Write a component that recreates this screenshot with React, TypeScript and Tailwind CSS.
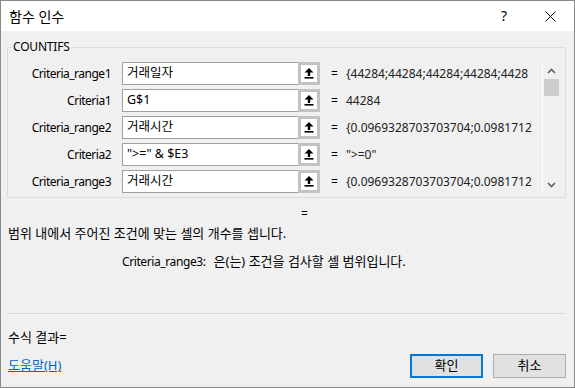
import { ReactNode } from 'react';

const font = { fontFamily: '"Noto Sans", "Noto Sans CJK KR", sans-serif' };

const rows = [
  { label: 'Criteria_range1', input: '거래일자', value: '{44284;44284;44284;44284;4428' },
  { label: 'Criteria1', input: 'G$1', value: '44284' },
  { label: 'Criteria_range2', input: '거래시간', value: '{0.0969328703703704;0.0981712' },
  { label: 'Criteria2', input: '">=" & $E3', value: '">=0"' },
  { label: 'Criteria_range3', input: '거래시간', value: '{0.0969328703703704;0.0981712' },
];

// collapse-dialog icon: arrow up over a bar
const RefIcon = () => (
  <svg width="10" height="11" viewBox="0 0 10 11">
    <path d="M5 0 L9.5 4.5 L6.2 4.5 L6.2 8 L3.8 8 L3.8 4.5 L0.5 4.5 Z" fill="#000" />
    <rect x="0.5" y="9" width="9" height="1.6" fill="#000" />
  </svg>
);

const Chevron = ({ up }: { up?: boolean }) => (
  <svg width="9" height="6" viewBox="0 0 9 6" className={up ? '' : 'rotate-180'}>
    <path d="M1 5 L4.5 1.5 L8 5" fill="none" stroke="#606060" strokeWidth="1.6" />
  </svg>
);

const Field = ({ children }: { children: ReactNode }) => (
  <div className="flex h-[23px] w-[198px]">
    <div className="flex flex-1 items-center overflow-hidden whitespace-nowrap border border-r-0 border-[#a0a0a0] bg-white pl-[4px] text-[12.5px] text-black">
      {children}
    </div>
    <div className="flex w-[22px] items-center justify-center border-[3px] border-[#c2c2c2] bg-white">
      <RefIcon />
    </div>
  </div>
);

const Button = ({ label, primary }: { label: string; primary?: boolean }) => (
  <div
    className={
      primary
        ? 'flex h-[24px] w-[73px] items-center justify-center border-2 border-[#0078d7] bg-[#e1e1e1] text-[13px] text-black'
        : 'flex h-[24px] w-[73px] items-center justify-center border border-[#adadad] bg-[#e1e1e1] text-[13px] text-black'
    }>
    {label}
  </div>
);

export default function App() {
  return (
    <div style={font} className="flex h-[388px] w-[575px] flex-col border border-[#8a8a8a] bg-[#f0f0f0] text-[12px] text-black">
      {/* title bar */}
      <div className="flex h-[30px] shrink-0 items-center bg-white">
        <span className="ml-[8px] text-[14px]">함수 인수</span>
        <span className="ml-auto text-[14px] leading-none">?</span>
        <svg width="11" height="11" viewBox="0 0 11 11" className="ml-[38px] mr-[18px]">
          <path d="M0.5 0.5 L10.5 10.5 M10.5 0.5 L0.5 10.5" stroke="#000" strokeWidth="1" />
        </svg>
      </div>

      <fieldset className="ml-[6px] mt-[8px] w-[559px] border border-[#dcdcdc] pb-[4px] pr-[5px] pt-[7px]">
        <legend className="ml-[4px] pl-[1px] pr-[2px] text-[12px] leading-[16px] tracking-[-0.2px]">COUNTIFS</legend>
        <div className="flex">
          <div className="flex flex-col gap-[4px]">
            {rows.map((row, i) => (
              <div key={i} className="flex h-[23px] items-center">
                <div className="w-[104px] pr-[1px] text-right tracking-[-0.5px]">{row.label}</div>
                <div className="ml-[10px]">
                  <Field>{row.input}</Field>
                </div>
                <div className="w-[26px] pl-[11px]">=</div>
                <div className="w-[187px] overflow-hidden whitespace-nowrap text-[#222]">{row.value}</div>
              </div>
            ))}
          </div>
          <div className="ml-[9px] flex w-[17px] flex-col items-center border-l border-white">
            <div className="flex h-[17px] items-center justify-center">
              <Chevron up />
            </div>
            <div className="h-[17px] w-[15px] bg-[#cdcdcd]" />
            <div className="flex-1" />
            <div className="flex h-[17px] items-center justify-center">
              <Chevron />
            </div>
          </div>
        </div>
      </fieldset>

      <div className="mt-[8px] pl-[300px] leading-[16px]">=</div>
      <div className="mt-[3px] pl-[7px] text-[13px] leading-[16px]">범위 내에서 주어진 조건에 맞는 셀의 개수를 셉니다.</div>
      <div className="mt-[12px] flex items-baseline pl-[121px] leading-[16px]">
        <span className="tracking-[-0.4px]">Criteria_range3:</span>
        <span className="ml-[8px] text-[13px]">은(는) 조건을 검사할 셀 범위입니다.</span>
      </div>

      <div className="ml-[6px] mt-[43px] h-px w-[559px] bg-[#d9d9d9]" />
      <div className="mt-[15px] pl-[7px] text-[13px] leading-[16px]">수식 결과=</div>

      <div className="mt-[9px] flex items-center pl-[7px] pr-[8px]">
        <span className="text-[13px] text-[#0066cc] underline">도움말(H)</span>
        <div className="ml-auto flex gap-[10px]">
          <Button label="확인" primary />
          <Button label="취소" />
        </div>
      </div>
    </div>
  );
}
